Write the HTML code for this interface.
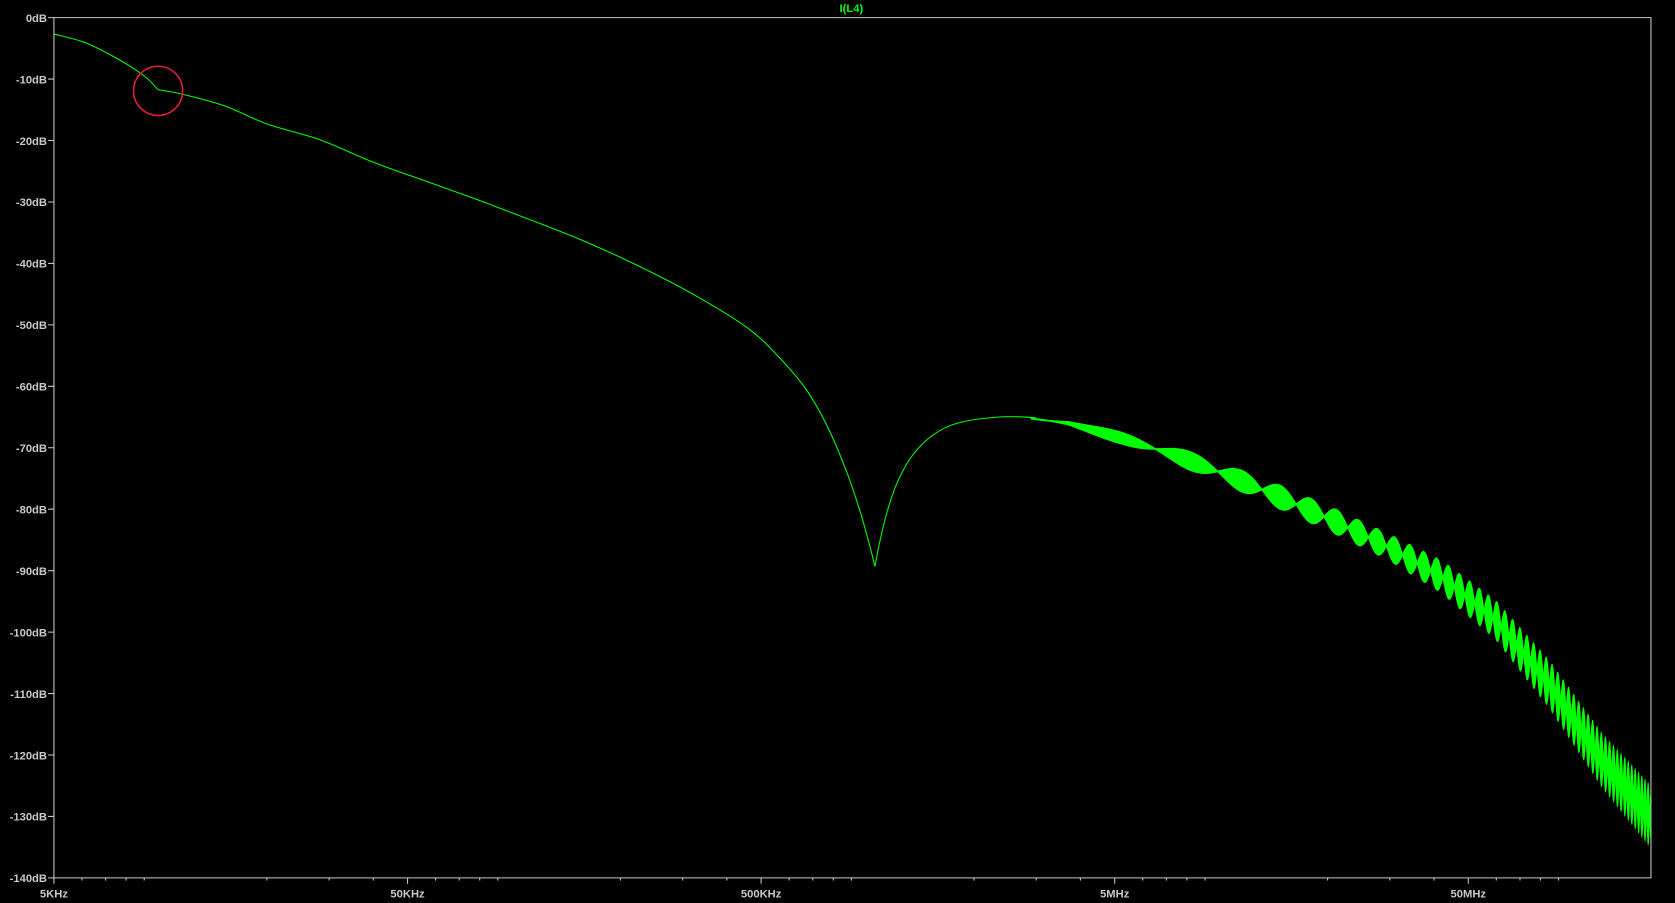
<!DOCTYPE html>
<html><head><meta charset="utf-8"><style>
html,body{margin:0;padding:0;background:#000;overflow:hidden}
svg{display:block}
text{font-family:"Liberation Sans",sans-serif;font-weight:bold;font-size:10.5px}
</style></head><body>
<svg id="s" width="1675" height="903" viewBox="0 0 1568 845" preserveAspectRatio="none">
<rect width="1568" height="845" fill="#000"/>
<g id="ax" stroke="#c8c8c8" stroke-width="1" fill="none">
<path d="M50.5 16.5H1545.5V821.5H50.5Z"/>
</g>
<g id="lbl" fill="#c8c8c8"></g>
<text x="797" y="11" fill="#00ff00" text-anchor="middle" font-size="10">I(L4)</text>
<path id="tr" fill="none" stroke="#00ff00" stroke-width="1" d=""/>
<path id="band" fill="#00ff00" stroke="#00ff00" stroke-width="0.6" d=""/>
<circle cx="148" cy="85" r="23" fill="none" stroke="#e0203a" stroke-width="1.5"/>
</svg>
<script>
var NS="http://www.w3.org/2000/svg";
var ax=document.getElementById('ax'),lbl=document.getElementById('lbl');
function el(p,t,a,txt){var e=document.createElementNS(NS,t);for(var k in a)e.setAttribute(k,a[k]);if(txt)e.textContent=txt;p.appendChild(e);return e;}
var d="";
for(var i=0;i<=14;i++){var y=16.5+i*(805/14);d+="M45 "+y+"H50.5";
el(lbl,'text',{x:44,y:y+4,'text-anchor':'end'},(i==0?"0":"-"+(i*10))+"dB");}
var L=50.5,dec=331;
var names=["5KHz","50KHz","500KHz","5MHz","50MHz"];
for(var k=0;k<5;k++){var x=L+k*dec;d+="M"+x+" 821.5V827";el(lbl,'text',{x:x,y:840,'text-anchor':'middle'},names[k]);}
for(var k=0;k<6;k++){for(var n=2;n<=9;n++){var x=L+k*dec+dec*Math.log10(n)-dec*Math.log10(5);
if(x>L&&x<1545)d+="M"+x+" 821.5V824";}}
el(ax,'path',{d:d});
function cr(p){var s="M"+p[0][0]+" "+p[0][1];for(var i=0;i<p.length-1;i++){var p0=p[i-1]||p[i],p1=p[i],p2=p[i+1],p3=p[i+2]||p2;
s+="C"+(p1[0]+(p2[0]-p0[0])/6).toFixed(2)+" "+(p1[1]+(p2[1]-p0[1])/6).toFixed(2)+" "+(p2[0]-(p3[0]-p1[0])/6).toFixed(2)+" "+(p2[1]-(p3[1]-p1[1])/6).toFixed(2)+" "+p2[0]+" "+p2[1];}return s;}
var a=[[51,32],[80,40],[110,55],[135,71],[148,84]];
var b=[[148,84],[170,88],[210,99],[250,116],[300,131],[350,152],[400,170],[450,188],[500,207],[550,227],[600,250],[650,276],[700,307],[730,335],[755,365],[775,400],[792,440],[805,478],[814,510],[819,530]];
var c=[[819,530],[824,505],[831,477],[841,449],[855,425],[875,406],[900,395],[940,390],[970,391]];
document.getElementById('tr').setAttribute('d',cr(a)+cr(b)+cr(c));
function interp(tab,x){for(var i=1;i<tab.length;i++){if(x<=tab[i][0]){var a=tab[i-1],b=tab[i];return a[1]+(b[1]-a[1])*(x-a[0])/(b[0]-a[0]);}}return tab[tab.length-1][1];}
var C=[[960,391],[1000,396],[1050,410],[1100,426],[1150,445],[1200,466],[1250,488],[1300,512],[1350,540],[1400,580],[1450,640],[1500,712],[1546,765]];
var H=[[960,0],[1000,3],[1100,8],[1200,11],[1300,12],[1400,18],[1450,22],[1500,25],[1546,29]];
var up=[],lo=[];
for(var x=965;x<=1545;x+=0.25){var f=5e6*Math.pow(10,(x-1043)/dec);var sn=Math.abs(Math.sin(Math.PI*f/3.27e6));
var cc=interp(C,x),h=interp(H,x);up.push([x,cc-h*sn-0.5]);lo.push([x,cc+h*sn+0.5]);}
var bb="M"+up.map(p=>p[0].toFixed(2)+" "+p[1].toFixed(2)).join("L")+"L"+lo.reverse().map(p=>p[0].toFixed(2)+" "+p[1].toFixed(2)).join("L")+"Z";
document.getElementById('band').setAttribute('d',bb);
</script>
</body></html>
